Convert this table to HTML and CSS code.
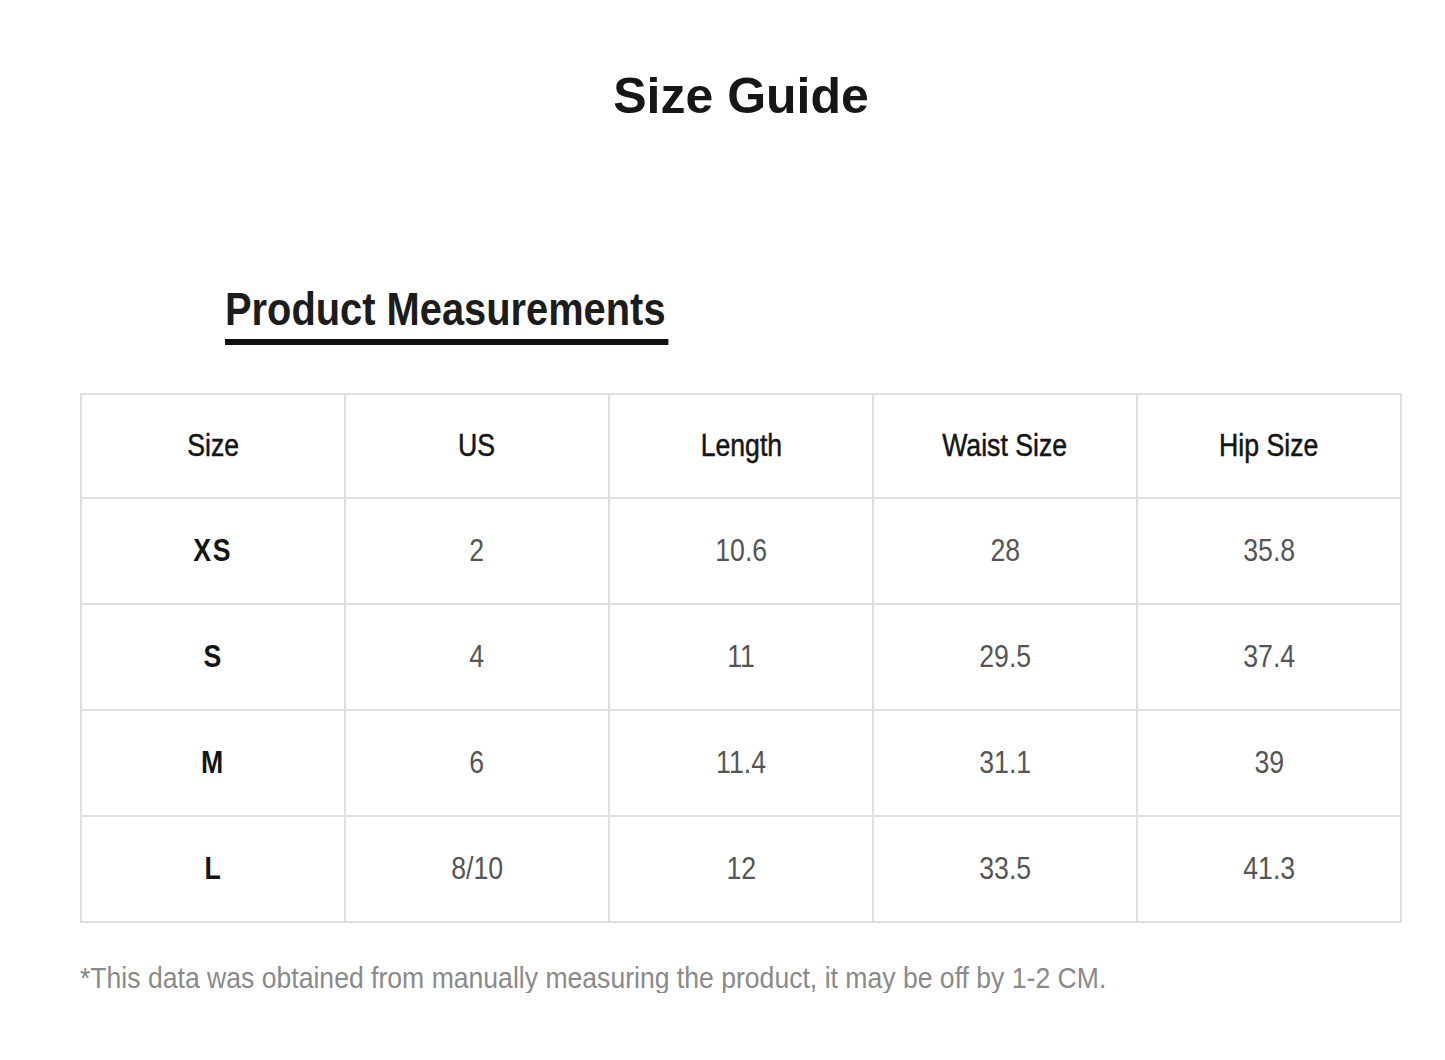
FILE: index.html
```html
<!DOCTYPE html>
<html lang="en">
<head>
<meta charset="utf-8">
<title>Size Guide</title>
<link rel="stylesheet" href="styles.css">
</head>
<body>
<main class="guide">
  <h1 class="title">Size Guide</h1>
  <h2 class="section"><span class="section-text">Product Measurements</span></h2>
  <table class="sizes">
    <thead>
      <tr>
        <th class="first"><span class="cx">Size</span></th>
        <th><span class="cx">US</span></th>
        <th><span class="cx">Length</span></th>
        <th><span class="cx">Waist Size</span></th>
        <th><span class="cx">Hip Size</span></th>
      </tr>
    </thead>
    <tbody>
      <tr>
        <td class="first"><span class="cx">XS</span></td>
        <td><span class="cx">2</span></td>
        <td><span class="cx">10.6</span></td>
        <td><span class="cx">28</span></td>
        <td><span class="cx">35.8</span></td>
      </tr>
      <tr>
        <td class="first"><span class="cx">S</span></td>
        <td><span class="cx">4</span></td>
        <td><span class="cx">11</span></td>
        <td><span class="cx">29.5</span></td>
        <td><span class="cx">37.4</span></td>
      </tr>
      <tr>
        <td class="first"><span class="cx">M</span></td>
        <td><span class="cx">6</span></td>
        <td><span class="cx">11.4</span></td>
        <td><span class="cx">31.1</span></td>
        <td><span class="cx">39</span></td>
      </tr>
      <tr>
        <td class="first"><span class="cx">L</span></td>
        <td><span class="cx">8/10</span></td>
        <td><span class="cx">12</span></td>
        <td><span class="cx">33.5</span></td>
        <td><span class="cx">41.3</span></td>
      </tr>
    </tbody>
  </table>
  <p class="note"><span class="note-text">*This data was obtained from manually measuring the product, it may be off by 1-2 CM.</span></p>
</main>
</body>
</html>
```

FILE: styles.css
```css
html, body {
  margin: 0;
  padding: 0;
  background: #ffffff;
}

body {
  font-family: "Liberation Sans", Arial, sans-serif;
  color: #1a1a1a;
}

.guide {
  width: 1322px;
  margin-left: 80px;
  display: flex;
  flex-direction: column;
}

.title {
  margin: 71px 0 0;
  height: 50px;
  font-size: 50px;
  line-height: 50px;
  font-weight: 700;
  text-align: center;
  color: #161616;
}

.section {
  margin: 165px 0 0 145px;
  font-size: 46px;
  line-height: 46px;
  font-weight: 700;
  color: #1c1c1c;
}

.section-text {
  display: inline-block;
  padding-bottom: 7px;
  padding-right: 3px;
  border-bottom: 6px solid #111111;
  transform: scaleX(0.866);
  transform-origin: left top;
}

.sizes {
  margin-top: 48px;
  width: 1322px;
  border-collapse: collapse;
  table-layout: fixed;
}

.sizes th,
.sizes td {
  border: 2px solid #dedede;
  height: 104px;
  padding: 0;
  text-align: center;
  vertical-align: middle;
  font-size: 31px;
  line-height: 34px;
}

.sizes th {
  height: 102px;
  font-weight: 400;
  color: #151515;
  -webkit-text-stroke: 0.5px #151515;
}

.sizes td {
  color: #555555;
}

.sizes td.first {
  font-weight: 700;
  color: #141414;
  letter-spacing: 2px;
}

.cx {
  display: inline-block;
  transform: scaleX(0.86);
  transform-origin: center;
}

.note {
  margin: 40px 0 0;
  font-size: 30px;
  line-height: 30px;
  color: #8a8a8a;
}

.note-text {
  display: inline-block;
  white-space: nowrap;
  transform: scaleX(0.886);
  transform-origin: left top;
}
```
